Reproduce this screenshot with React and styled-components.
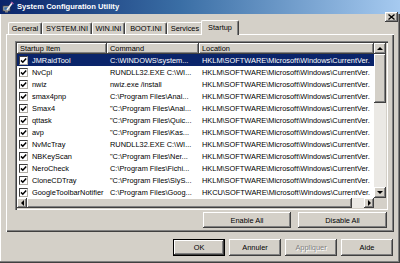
import React from 'react';
import styled, { createGlobalStyle, css } from 'styled-components';

const GlobalStyle = createGlobalStyle`
  html, body {
    margin: 0;
    padding: 0;
    background: #d4d0c8;
  }
  body {
    font-family: "Liberation Sans", Arial, sans-serif;
    font-size: 7.4px;
    color: #000;
  }
  * {
    box-sizing: border-box;
  }
`;

const raised = css`
  background: #d4d0c8;
  box-shadow: inset -1px -1px 0 #404040, inset 1px 1px 0 #ffffff,
    inset -2px -2px 0 #808080;
`;

const Window = styled.div`
  width: 400px;
  height: 263px;
  background: #d4d0c8;
  display: flex;
  flex-direction: column;
  overflow: hidden;
  box-shadow: inset -1px -1px 0 #404040, inset -2px -2px 0 #808080,
    inset 1px 0 0 #ffffff;
`;

const TitleBar = styled.div`
  height: 14px;
  flex: none;
  display: flex;
  align-items: flex-start;
  padding: 0 2px 0 2px;
  background: linear-gradient(to right, #0a246a 0%, #3a6ea5 45%, #a6caf0 100%);
`;

const AppIcon = styled.svg`
  width: 12px;
  height: 12px;
  margin-top: 1px;
  flex: none;
`;

const Title = styled.div`
  color: #fff;
  font-weight: bold;
  font-size: 7.6px;
  line-height: 13px;
  margin-left: 3px;
  white-space: nowrap;
`;

const CloseButton = styled.div`
  ${raised};
  margin-left: auto;
  margin-top: 12px;
  width: 13px;
  height: 10px;
  flex: none;
  display: flex;
  align-items: center;
  justify-content: center;
  position: relative;
  z-index: 2;
`;

const TabStrip = styled.div`
  height: 20px;
  flex: none;
  display: flex;
  align-items: flex-end;
  padding: 0 0 0 8px;
`;

const Tab = styled.div`
  width: ${p => p.$w}px;
  height: 12px;
  flex: none;
  display: flex;
  align-items: center;
  justify-content: center;
  white-space: nowrap;
  background: #d4d0c8;
  border-top: 1px solid #fff;
  border-left: 1px solid #fff;
  border-right: 1px solid #404040;
  border-radius: 2px 2px 0 0;
  box-shadow: inset -1px 0 0 #808080;
  ${p =>
    p.$active &&
    css`
      width: ${p.$w + 4}px;
      height: 15px;
      margin: 0 -2px -1px -2px;
      padding-bottom: 2px;
      position: relative;
      z-index: 1;
    `}
`;

const Panel = styled.div`
  height: 198px;
  flex: none;
  margin: 0 6px;
  padding: 7px 6px 4px 9px;
  display: flex;
  flex-direction: column;
  box-shadow: inset 1px 1px 0 #fff, inset -1px -1px 0 #404040,
    inset -2px -2px 0 #808080;
`;

const ListView = styled.div`
  height: 169px;
  flex: none;
  padding: 2px;
  background: #fff;
  display: grid;
  grid-template-columns: 1fr 12px;
  grid-template-rows: 1fr 10px;
  box-shadow: inset 1px 1px 0 #808080, inset 2px 2px 0 #404040,
    inset -1px -1px 0 #fff, inset -2px -2px 0 #d4d0c8;
`;

const ListContent = styled.div`
  overflow: hidden;
  display: flex;
  flex-direction: column;
`;

const Header = styled.div`
  display: grid;
  grid-template-columns: 90px 92px 1fr;
  height: 11px;
  flex: none;
`;

const HeaderCell = styled.div`
  ${raised};
  padding-left: 3px;
  display: flex;
  align-items: center;
  white-space: nowrap;
`;

const Row = styled.div`
  display: grid;
  grid-template-columns: 90px 92px 1fr;
  height: 12px;
  flex: none;
  align-items: center;
  background: ${p => (p.$selected ? '#0a246a' : 'transparent')};
  color: ${p => (p.$selected ? '#fff' : '#000')};
`;

const NameCell = styled.div`
  display: flex;
  align-items: center;
  gap: 4px;
  padding-left: 2px;
  white-space: nowrap;
  overflow: hidden;
`;

const Cell = styled.div`
  padding-left: 3px;
  white-space: nowrap;
  overflow: hidden;
`;

const CheckBox = styled.div`
  width: 9px;
  height: 9px;
  flex: none;
  background: #fff;
  border: 1px solid;
  border-color: #404040 #b0aca4 #b0aca4 #404040;
  display: flex;
  align-items: center;
  justify-content: center;
`;

const VScroll = styled.div`
  display: flex;
  flex-direction: column;
  background: #ebe9e5;
`;

const HScroll = styled.div`
  display: flex;
  background: #ebe9e5;
`;

const Corner = styled.div`
  background: #d4d0c8;
`;

const ArrowButton = styled.div`
  ${raised};
  width: ${p => (p.$horizontal ? '10px' : '12px')};
  height: ${p => (p.$horizontal ? '10px' : '11px')};
  flex: none;
  display: flex;
  align-items: center;
  justify-content: center;
`;

const Thumb = styled.div`
  ${raised};
  flex: none;
  ${p => (p.$horizontal ? `width: ${p.$size}px;` : `height: ${p.$size}px;`)}
`;

const Track = styled.div`
  flex: 1;
`;

const ActionRow = styled.div`
  display: flex;
  justify-content: flex-end;
  gap: 7px;
  margin-top: 2px;
  padding-right: 1px;
`;

const Button = styled.div`
  ${raised};
  width: ${p => p.$w}px;
  height: ${p => p.$h}px;
  display: flex;
  align-items: center;
  justify-content: center;
  white-space: nowrap;
  ${p =>
    p.$default &&
    css`
      box-shadow: inset 0 0 0 1px #000, inset -2px -2px 0 #404040,
        inset 2px 2px 0 #ffffff, inset -3px -3px 0 #808080;
    `}
  ${p =>
    p.$disabled &&
    css`
      color: #808080;
      text-shadow: 1px 1px 0 #fff;
    `}
`;

const DialogButtons = styled.div`
  display: flex;
  justify-content: flex-end;
  gap: 4px;
  margin-top: 7px;
  padding-right: 7px;
`;

const tabs = [
  { label: 'General', w: 34 },
  { label: 'SYSTEM.INI', w: 50 },
  { label: 'WIN.INI', w: 33 },
  { label: 'BOOT.INI', w: 42 },
  { label: 'Services', w: 36 },
  { label: 'Startup', w: 34, active: true },
];

const HKLM = 'HKLM\\SOFTWARE\\Microsoft\\Windows\\CurrentVer.';

const items = [
  ['JMRaidTool', 'C:\\WINDOWS\\system...', HKLM],
  ['NvCpl', 'RUNDLL32.EXE C:\\WI...', HKLM],
  ['nwiz', 'nwiz.exe /install', HKLM],
  ['smax4pnp', 'C:\\Program Files\\Anal...', HKLM],
  ['Smax4', '"C:\\Program Files\\Anal...', HKLM],
  ['qttask', '"C:\\Program Files\\Quic...', HKLM],
  ['avp', '"C:\\Program Files\\Kas...', HKLM],
  ['NvMcTray', 'RUNDLL32.EXE C:\\WI...', HKLM],
  ['NBKeyScan', '"C:\\Program Files\\Ner...', HKLM],
  ['NeroCheck', 'C:\\Program Files\\Fichi...', HKLM],
  ['CloneCDTray', '"C:\\Program Files\\SlyS...', HKLM],
  ['GoogleToolbarNotifier', 'C:\\Program Files\\Goog...', 'HKCU\\SOFTWARE\\Microsoft\\Windows\\CurrentVer.'],
];

const Check = () => (
  <svg width="7" height="7" viewBox="0 0 7 7">
    <path d="M1 3.4 L2.8 5.2 L6.2 1.6" stroke="#000" strokeWidth="1.5" fill="none" />
  </svg>
);

const Arrow = ({ dir }) => {
  const shapes = {
    up: '1,4 4,1 7,4',
    down: '1,1 4,4 7,1',
    left: '4,1 1,4 4,7',
    right: '1,1 4,4 1,7',
  };
  const vertical = dir === 'up' || dir === 'down';
  return (
    <svg width={vertical ? 8 : 5} height={vertical ? 5 : 8} viewBox={vertical ? '0 0 8 5' : '0 0 5 8'}>
      <polygon points={shapes[dir]} fill="#000" />
    </svg>
  );
};

const App = () => (
  <>
    <GlobalStyle />
    <Window>
      <TitleBar>
        <AppIcon viewBox="0 0 12 12">
          <rect x="1" y="5" width="7" height="5" fill="#c0c0c0" stroke="#404040" strokeWidth="0.8" />
          <rect x="2.2" y="6.2" width="4.6" height="2.6" fill="#3a6ea5" />
          <rect x="3" y="10" width="3" height="1.5" fill="#808080" />
          <path d="M5 9 L10.5 1.5" stroke="#f0f0f0" strokeWidth="1.6" />
          <path d="M9 1 L11.5 3" stroke="#a050a0" strokeWidth="1.4" />
        </AppIcon>
        <Title>System Configuration Utility</Title>
        <CloseButton>
          <svg width="7" height="6" viewBox="0 0 7 6">
            <path d="M0.5 0.5 L6.5 5.5 M6.5 0.5 L0.5 5.5" stroke="#000" strokeWidth="1.3" />
          </svg>
        </CloseButton>
      </TitleBar>

      <TabStrip>
        {tabs.map(t => (
          <Tab key={t.label} $w={t.w} $active={t.active}>
            {t.label}
          </Tab>
        ))}
      </TabStrip>

      <Panel>
        <ListView>
          <ListContent>
            <Header>
              <HeaderCell>Startup Item</HeaderCell>
              <HeaderCell>Command</HeaderCell>
              <HeaderCell>Location</HeaderCell>
            </Header>
            {items.map(([name, command, location], i) => (
              <Row key={name} $selected={i === 0}>
                <NameCell>
                  <CheckBox>
                    <Check />
                  </CheckBox>
                  {name}
                </NameCell>
                <Cell>{command}</Cell>
                <Cell>{location}</Cell>
              </Row>
            ))}
          </ListContent>
          <VScroll>
            <ArrowButton>
              <Arrow dir="up" />
            </ArrowButton>
            <Thumb $size={49} />
            <Track />
            <ArrowButton>
              <Arrow dir="down" />
            </ArrowButton>
          </VScroll>
          <HScroll>
            <ArrowButton $horizontal>
              <Arrow dir="left" />
            </ArrowButton>
            <Thumb $horizontal $size={325} />
            <Track />
            <ArrowButton $horizontal>
              <Arrow dir="right" />
            </ArrowButton>
          </HScroll>
          <Corner />
        </ListView>

        <ActionRow>
          <Button $w={88} $h={16}>Enable All</Button>
          <Button $w={89} $h={16}>Disable All</Button>
        </ActionRow>
      </Panel>

      <DialogButtons>
        <Button $w={52} $h={17} $default>OK</Button>
        <Button $w={52} $h={17}>Annuler</Button>
        <Button $w={52} $h={17} $disabled>Appliquer</Button>
        <Button $w={52} $h={17}>Aide</Button>
      </DialogButtons>
    </Window>
  </>
);

export default App;
